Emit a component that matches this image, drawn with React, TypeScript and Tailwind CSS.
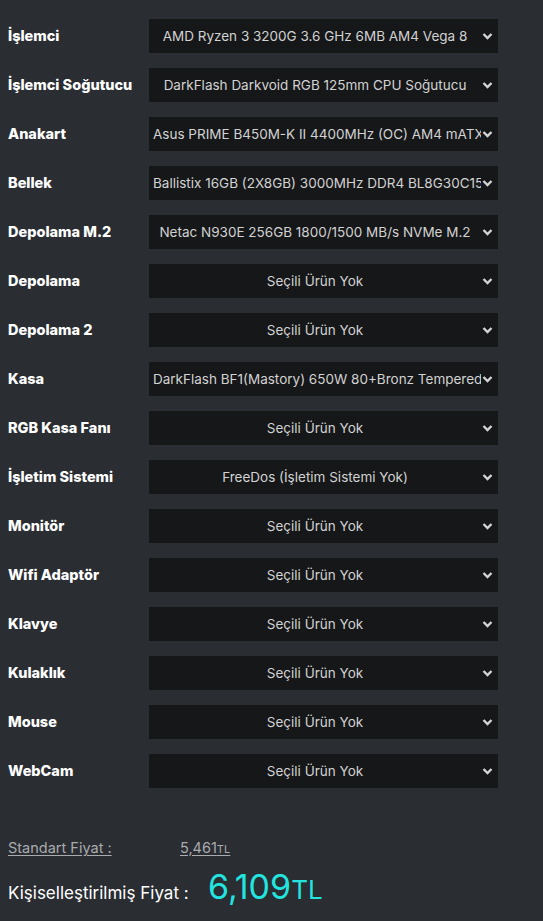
const rows = [
  { label: "İşlemci", value: "AMD Ryzen 3 3200G 3.6 GHz 6MB AM4 Vega 8" },
  { label: "İşlemci Soğutucu", value: "DarkFlash Darkvoid RGB 125mm CPU Soğutucu" },
  { label: "Anakart", value: "Asus PRIME B450M-K II 4400MHz (OC) AM4 mATX Anakart", clip: true },
  { label: "Bellek", value: "Ballistix 16GB (2X8GB) 3000MHz DDR4 BL8G30C15U4B", clip: true },
  { label: "Depolama M.2", value: "Netac N930E 256GB 1800/1500 MB/s NVMe M.2" },
  { label: "Depolama", value: "Seçili Ürün Yok" },
  { label: "Depolama 2", value: "Seçili Ürün Yok" },
  { label: "Kasa", value: "DarkFlash BF1(Mastory) 650W 80+Bronz Tempered Glass", clip: true },
  { label: "RGB Kasa Fanı", value: "Seçili Ürün Yok" },
  { label: "İşletim Sistemi", value: "FreeDos (İşletim Sistemi Yok)" },
  { label: "Monitör", value: "Seçili Ürün Yok" },
  { label: "Wifi Adaptör", value: "Seçili Ürün Yok" },
  { label: "Klavye", value: "Seçili Ürün Yok" },
  { label: "Kulaklık", value: "Seçili Ürün Yok" },
  { label: "Mouse", value: "Seçili Ürün Yok" },
  { label: "WebCam", value: "Seçili Ürün Yok" },
]

function Chevron() {
  return (
    <svg width="11" height="8" viewBox="0 0 11 8" className="ml-[1px] shrink-0">
      <polyline points="1.5,2 5.5,6 9.5,2" fill="none" stroke="#d4d4d4" strokeWidth="2.4" />
    </svg>
  )
}

export default function App() {
  return (
    <div className="min-h-[921px] w-[543px] bg-[#2a2d32] font-['Inter',sans-serif] pl-2 pt-[19px]">
      {/* Parts */}
      <div className="flex flex-col gap-[15px]">
        {rows.map((row) => (
          <div key={row.label} className="flex items-center">
            <div className="w-[141px] -mt-px text-[14.5px] font-extrabold text-white">{row.label}</div>
            <div className="flex h-[34px] w-[349px] items-center bg-[#161719] pr-[5px] text-[13.5px] text-[#d2d2d2]">
              <div
                className={
                  row.clip
                    ? "flex-1 overflow-hidden whitespace-nowrap pl-[4px]"
                    : "flex-1 overflow-hidden whitespace-nowrap text-center pl-[4px] pr-[4px]"
                }
              >
                {row.value}
              </div>
              <Chevron />
            </div>
          </div>
        ))}
      </div>

      {/* Prices */}
      <div className="mt-[49px] flex items-baseline text-[14.5px] text-[#a9abae]">
        <span className="w-[172px] underline underline-offset-2">Standart Fiyat : </span>
        <span className="underline underline-offset-2">
          5,461<span className="text-[11px]">TL</span>
        </span>
      </div>
      <div className="mt-[11px] flex items-baseline">
        <span className="w-[200px] text-[17px] text-white">Kişiselleştirilmiş Fiyat : </span>
        <span className="text-[34px] leading-none text-[#22e5e0]">6,109</span>
        <span className="text-[26px] leading-none text-[#22e5e0]">TL</span>
      </div>
    </div>
  )
}
